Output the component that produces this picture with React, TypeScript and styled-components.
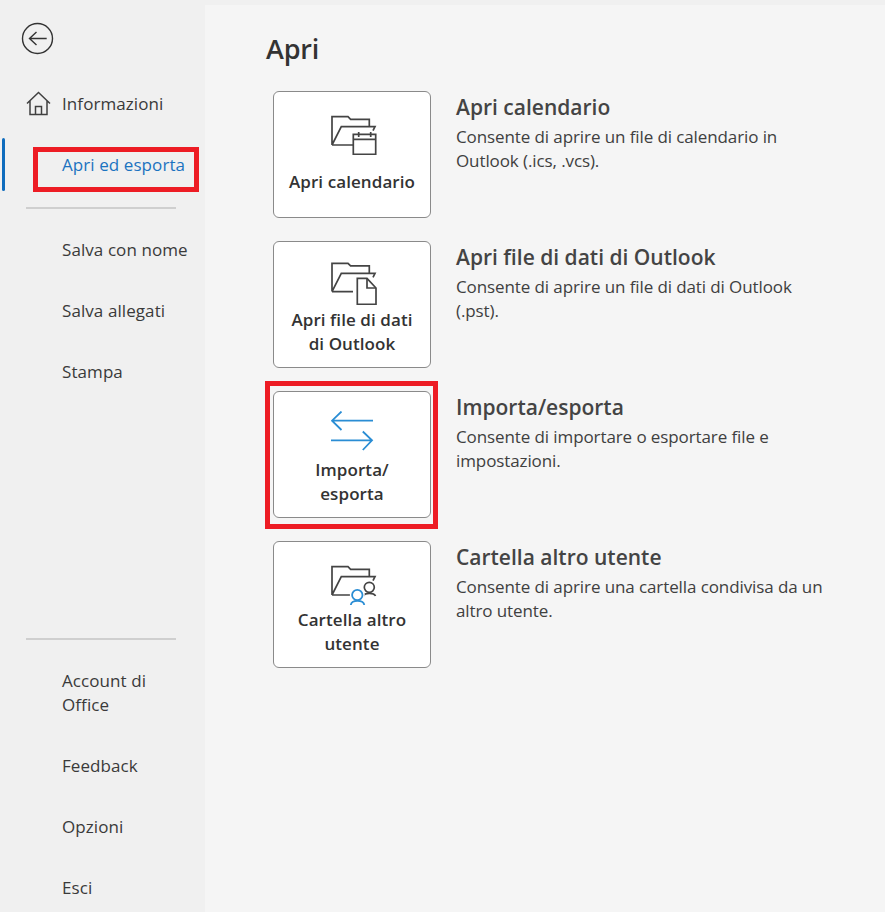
import React from "react";
import styled, { createGlobalStyle } from "styled-components";

const Global = createGlobalStyle`
  html, body { margin: 0; padding: 0; overflow: hidden; background: #f0f0f0; }
  body { font-family: "Open Sans", "Noto Sans", "Liberation Sans", sans-serif; }
`;

const Page = styled.div`
  display: flex;
  width: 885px;
  height: 912px;
  overflow: hidden;
  background: #f0f0f0;
`;

const Sidebar = styled.nav`
  flex: none;
  display: flex;
  flex-direction: column;
  width: 205px;
  height: 918px;
  padding-top: 22px;
  box-sizing: border-box;
`;

const BackIcon = styled.svg`
  display: block;
  flex: none;
  margin: 0 0 18px 21px;
  color: #333;
`;

const NavItem = styled.div<{ $active?: boolean; $tall?: boolean }>`
  position: relative;
  flex: none;
  display: flex;
  align-items: center;
  height: ${(p) => (p.$tall ? 85 : 61)}px;
  padding-left: 62px;
  padding-right: 10px;
  font-size: 17px;
  letter-spacing: 0.08px;
  line-height: 24px;
  color: ${(p) => (p.$active ? "#1b73c0" : "#3a3a3a")};
`;

const HomeIcon = styled.svg`
  position: absolute;
  left: 26px;
  top: 18px;
  color: #404040;
`;

const ActiveBar = styled.span`
  position: absolute;
  left: 2px;
  top: 4px;
  width: 3px;
  height: 53px;
  border-radius: 2px;
  background: #0f6cbd;
`;

const NavHighlight = styled.span`
  position: absolute;
  left: 33px;
  top: 13px;
  width: 166px;
  height: 45px;
  box-sizing: border-box;
  border: 5px solid #ed1c24;
`;

const Divider = styled.hr<{ $bottom?: boolean }>`
  flex: none;
  width: 150px;
  height: 2px;
  margin: ${(p) => (p.$bottom ? "auto" : "12px")} 0 10px 26px;
  border: 0;
  background: #cfcfcf;
`;

const Main = styled.main`
  flex: 1;
  margin-top: 5px;
  padding: 0 0 0 61px;
  background: #f5f5f5;
`;

const Title = styled.h1`
  margin: 25px 0 23px;
  font-size: 27px;
  font-weight: 600;
  line-height: 38px;
  letter-spacing: -0.2px;
  color: #333;
`;

const ActionList = styled.div`
  display: flex;
  flex-direction: column;
  gap: 23px;
  padding-left: 7px;
`;

const ActionRow = styled.section`
  display: flex;
  gap: 25px;
`;

const Card = styled.div`
  position: relative;
  flex: none;
  display: flex;
  flex-direction: column;
  align-items: center;
  width: 158px;
  height: 127px;
  box-sizing: border-box;
  border: 1px solid #8a8a8a;
  border-radius: 6px;
  background: #fff;
`;

const CardHighlight = styled.span`
  position: absolute;
  left: -9px;
  right: -8px;
  top: -11px;
  bottom: -12px;
  border: 5px solid #ed1c24;
`;

const IconSlot = styled.div`
  flex: none;
  display: flex;
  align-items: flex-end;
  height: 63px;
  margin-left: 4px;
  svg { display: block; }
`;

const CardLabel = styled.div`
  flex: none;
  display: flex;
  align-items: center;
  justify-content: center;
  height: 49px;
  padding: 2.5px 6px 0;
  text-align: center;
  font-size: 17px;
  font-weight: 600;
  line-height: 24px;
  letter-spacing: 0.08px;
  color: #333;
`;

const ActionText = styled.div`
  flex: 1;
  padding-top: 3px;
  max-width: 375px;
`;

const ActionTitle = styled.h2`
  margin: 0 0 4px;
  font-size: 21px;
  font-weight: 600;
  line-height: 27px;
  letter-spacing: 0;
  color: #444;
`;

const ActionDesc = styled.p`
  margin: 0;
  font-size: 17px;
  line-height: 24px;
  letter-spacing: -0.1px;
  color: #404040;
`;

const Folder = ({ y = 1.7 }: { y?: number }) => (
  <path
    d={`M1 ${y + 28.3} V${y} H17 L19.6 ${y + 2.6} H38.3 V${y + 10} M1 ${y + 28.3} L10.3 ${y + 10} H44 L42 ${y + 14} M1 ${y + 28.3} H22`}
    fill="none"
    stroke="#444"
    strokeWidth="1.7"
  />
);

const CalendarIcon = () => (
  <svg width="46" height="40" viewBox="0 0 46 40">
    <Folder />
    <path d="M22.3 19.3 H44.7 V39.3 H22.3 Z" fill="#fff" stroke="#444" strokeWidth="1.7" />
    <path d="M22.3 24.3 H44.7 M27.7 17 V22 M39.7 17 V22" fill="none" stroke="#444" strokeWidth="1.7" />
  </svg>
);

const FileIcon = () => (
  <svg width="46" height="43" viewBox="0 0 46 43">
    <Folder y={1.3} />
    <path d="M26.3 16.3 H36 L45 26 V42.3 H26.3 Z" fill="#fff" stroke="#444" strokeWidth="1.7" />
    <path d="M36 16.3 V26 H45" fill="none" stroke="#444" strokeWidth="1.7" />
  </svg>
);

const ArrowsIcon = () => (
  <svg width="46" height="44" viewBox="0 0 46 44">
    <path
      d="M1 9.7 H42 M10.5 0.5 L1 9.7 L10.5 19 M0 29.3 H41 M31.8 20.5 L41 29.3 L31.8 39"
      fill="none"
      stroke="#2a8dd4"
      strokeWidth="1.8"
    />
  </svg>
);

const SharedIcon = () => (
  <svg width="46" height="40" viewBox="0 0 46 40">
    <Folder />
    <circle cx="38.3" cy="22.3" r="6.6" fill="#fff" stroke="none" />
    <circle cx="38.3" cy="22.3" r="5" fill="none" stroke="#444" strokeWidth="1.7" />
    <path d="M32.5 31 C33.5 27.5 43 27.5 44.5 31" fill="none" stroke="#444" strokeWidth="1.7" />
    <circle cx="26.3" cy="30" r="7.5" fill="#fff" stroke="none" />
    <circle cx="26.3" cy="30" r="5.2" fill="none" stroke="#2a8dd4" strokeWidth="1.8" />
    <path d="M19.8 40 C20.5 34.5 32.5 34.5 33.3 40" fill="none" stroke="#2a8dd4" strokeWidth="1.8" />
  </svg>
);

const actions = [
  {
    label: ["Apri calendario"],
    title: "Apri calendario",
    desc: "Consente di aprire un file di calendario in Outlook (.ics, .vcs).",
    icon: <CalendarIcon />,
  },
  {
    label: ["Apri file di dati", "di Outlook"],
    title: "Apri file di dati di Outlook",
    desc: "Consente di aprire un file di dati di Outlook (.pst).",
    icon: <FileIcon />,
  },
  {
    label: ["Importa/", "esporta"],
    title: "Importa/esporta",
    desc: "Consente di importare o esportare file e impostazioni.",
    icon: <ArrowsIcon />,
    marked: true,
  },
  {
    label: ["Cartella altro", "utente"],
    title: "Cartella altro utente",
    desc: "Consente di aprire una cartella condivisa da un altro utente.",
    icon: <SharedIcon />,
  },
];

export default function App() {
  return (
    <Page>
      <Global />
      <Sidebar>
        <BackIcon width="33" height="33" viewBox="0 0 33 33">
          <circle cx="16.5" cy="16.5" r="15" fill="none" stroke="currentColor" strokeWidth="1.4" />
          <path d="M25.7 16.5 H8.5 M15.5 10 L8.5 16.5 L15.5 23" fill="none" stroke="currentColor" strokeWidth="1.4" />
        </BackIcon>
        <NavItem>
          <HomeIcon width="25" height="25" viewBox="0 0 25 25">
            <path
              d="M1 12.5 L12.5 1.5 L24 12.5 M4 10 V23.5 H21 V10 M9.5 23.5 V15.5 H15.5 V23.5"
              fill="none"
              stroke="currentColor"
              strokeWidth="1.5"
            />
          </HomeIcon>
          Informazioni
        </NavItem>
        <NavItem $active>
          <ActiveBar />
          <NavHighlight />
          Apri ed esporta
        </NavItem>
        <Divider />
        <NavItem>Salva con nome</NavItem>
        <NavItem>Salva allegati</NavItem>
        <NavItem>Stampa</NavItem>
        <Divider $bottom />
        <NavItem $tall>
          Account di
          <br />
          Office
        </NavItem>
        <NavItem>Feedback</NavItem>
        <NavItem>Opzioni</NavItem>
        <NavItem>Esci</NavItem>
      </Sidebar>
      <Main>
        <Title>Apri</Title>
        <ActionList>
          {actions.map((a) => (
            <ActionRow key={a.title}>
              <Card>
                {a.marked && <CardHighlight />}
                <IconSlot>{a.icon}</IconSlot>
                <CardLabel>
                  <span>
                    {a.label.map((line, i) => (
                      <React.Fragment key={line}>
                        {i > 0 && <br />}
                        {line}
                      </React.Fragment>
                    ))}
                  </span>
                </CardLabel>
              </Card>
              <ActionText>
                <ActionTitle>{a.title}</ActionTitle>
                <ActionDesc>{a.desc}</ActionDesc>
              </ActionText>
            </ActionRow>
          ))}
        </ActionList>
      </Main>
    </Page>
  );
}
